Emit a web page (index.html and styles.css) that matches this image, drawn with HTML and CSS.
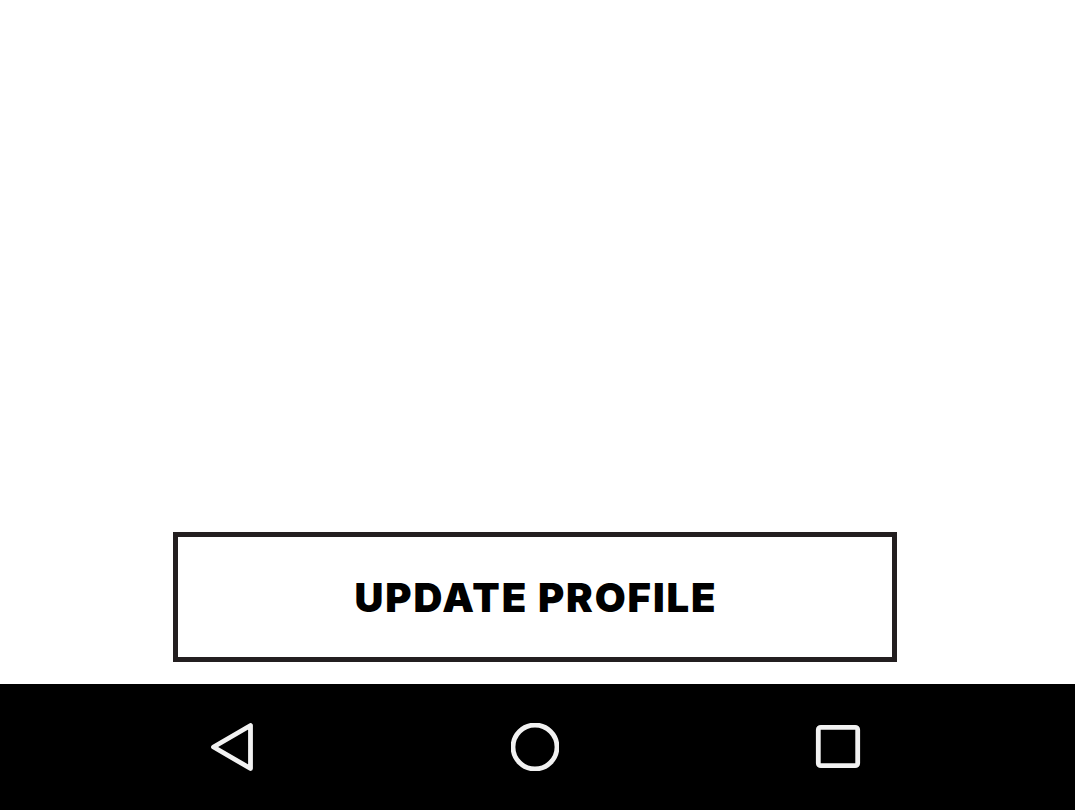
FILE: index.html
```html
<!DOCTYPE html>
<html>
<head>
<meta charset="utf-8">
<link rel="stylesheet" href="styles.css">
</head>
<body>
<div class="screen">
  <main class="content">
    <button class="update-btn">UPDATE PROFILE</button>
  </main>
  <nav class="navbar">
    <svg class="nav-icon" viewBox="0 0 48 48" width="48" height="48">
      <path d="M42.5 2.5 L42.5 45.5 L5.5 24 Z" fill="none" stroke="#f2f2f2" stroke-width="4.8" stroke-linejoin="round"/>
    </svg>
    <svg class="nav-icon" viewBox="0 0 48 48" width="48" height="48">
      <circle cx="24" cy="24" r="22" fill="none" stroke="#f2f2f2" stroke-width="4.8"/>
    </svg>
    <svg class="nav-icon" viewBox="0 0 48 48" width="48" height="48">
      <rect x="4.3" y="4.3" width="39.4" height="38.4" rx="2.5" fill="none" stroke="#f2f2f2" stroke-width="4.8"/>
    </svg>
  </nav>
</div>
</body>
</html>
```

FILE: styles.css
```css
html, body {
  margin: 0;
  padding: 0;
  background: #ffffff;
}
.screen {
  width: 1075px;
  height: 810px;
  display: flex;
  flex-direction: column;
}
.content {
  height: 684px;
  display: flex;
  align-items: flex-end;
  padding: 0 178px 22px 173px;
  box-sizing: border-box;
}
.update-btn {
  width: 724px;
  height: 130px;
  box-sizing: border-box;
  border: 5px solid #231f20;
  background: #ffffff;
  font-family: Inter, "Liberation Sans", sans-serif;
  font-weight: 900;
  font-size: 40px;
  letter-spacing: 1.9px;
  text-indent: 1.9px;
  color: #000000;
  padding: 0;
  margin: 0;
  display: flex;
  align-items: center;
  justify-content: center;
}
.navbar {
  height: 126px;
  background: #000000;
  display: flex;
  align-items: center;
  padding-left: 208px;
  gap: 255px;
}
.nav-icon {
  display: block;
}
```
